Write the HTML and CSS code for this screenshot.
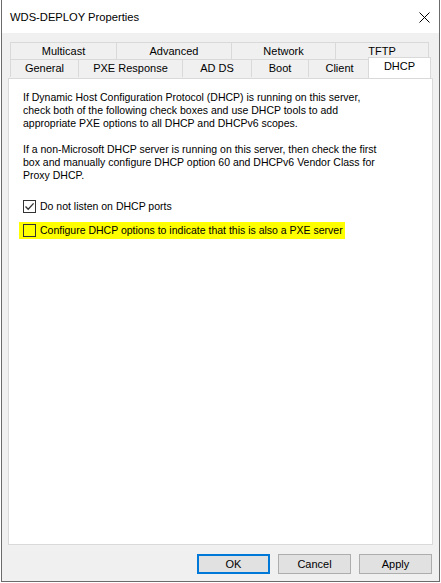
FILE: index.html
```html
<!DOCTYPE html>
<html>
<head>
<meta charset="utf-8">
<link rel="stylesheet" href="styles.css">
</head>
<body>
<div class="window">
  <div class="titlebar">
    <span class="title">WDS-DEPLOY Properties</span>
    <svg class="close" width="11" height="11" viewBox="0 0 11 11"><path d="M0.5 0.5 L10.5 10.5 M10.5 0.5 L0.5 10.5" stroke="#000" stroke-width="1" fill="none"/></svg>
  </div>
  <div class="client">
    <div class="tabs">
      <div class="tabrow back">
        <div class="tab w-multicast">Multicast</div>
        <div class="tab w-advanced">Advanced</div>
        <div class="tab w-network">Network</div>
        <div class="tab w-tftp last">TFTP</div>
      </div>
      <div class="tabrow front">
        <div class="tab w-general">General</div>
        <div class="tab w-pxe">PXE Response</div>
        <div class="tab w-adds">AD DS</div>
        <div class="tab w-boot">Boot</div>
        <div class="tab w-client">Client</div>
        <div class="tab selected">DHCP</div>
      </div>
    </div>
    <div class="panel">
      <p class="para">If Dynamic Host Configuration Protocol (DHCP) is running on this server,<br>check both of the following check boxes and use DHCP tools to add<br>appropriate PXE options to all DHCP and DHCPv6 scopes.</p>
      <p class="para">If a non-Microsoft DHCP server is running on this server, then check the first<br>box and manually configure DHCP option 60 and DHCPv6 Vendor Class for<br>Proxy DHCP.</p>
      <div class="check first">
        <span class="box"><svg width="11" height="11" viewBox="0 0 11 11"><path d="M1.5 5.5 L4.2 8.3 L9.6 2.4" stroke="#333" stroke-width="1.3" fill="none"/></svg></span>
        <span class="label">Do not listen on DHCP ports</span>
      </div>
      <div class="check second">
        <span class="box"></span>
        <span class="label">Configure DHCP options to indicate that this is also a PXE server</span>
      </div>
    </div>
    <div class="buttons">
      <div class="btn default">OK</div>
      <div class="btn">Cancel</div>
      <div class="btn">Apply</div>
    </div>
  </div>
</div>
</body>
</html>
```
FILE: styles.css
```css
html, body {
  margin: 0;
  padding: 0;
  background: #ffffff;
}
body {
  width: 441px;
  height: 583px;
  overflow: hidden;
  font-family: "Liberation Sans", Arial, sans-serif;
  font-size: 11px;
  color: #000;
}
.window {
  box-sizing: border-box;
  margin-left: 1px;
  width: 439px;
  height: 582px;
  border: 1px solid #6b6b6b;
  border-top: none;
  display: flex;
  flex-direction: column;
  background: #f0f0f0;
}
.titlebar {
  height: 33px;
  background: #ffffff;
  display: flex;
  align-items: center;
  justify-content: space-between;
  padding: 0 9px 0 8px;
  flex: none;
}
.title {
  font-family: "Liberation Sans", Arial, sans-serif;
  font-size: 11.2px;
  padding-top: 1px;
}
.close {
  display: block;
  margin-top: 1px;
}
.client {
  flex: 1;
  padding: 9px 6px 0 6px;
  display: flex;
  flex-direction: column;
}
.tabs {
  margin-left: 2px;
}
.tabrow {
  display: flex;
}
.tab {
  box-sizing: border-box;
  border: 1px solid #d9d9d9;
  border-right: none;
  border-bottom: none;
  background: #f0f0f0;
  text-align: center;
  line-height: 16px;
}
.tab.last {
  border-right: 1px solid #d9d9d9;
}
.back .tab {
  height: 17px;
}
.front .tab {
  height: 18px;
}
.w-multicast { width: 106px; }
.w-advanced { width: 115px; }
.w-network { width: 104px; }
.w-tftp { width: 94px; }
.w-general { width: 68px; }
.w-pxe { width: 104px; }
.w-adds { width: 69px; }
.w-boot { width: 57px; }
.w-client { width: 62px; }
.front .tab.selected {
  position: relative;
  z-index: 1;
  width: 63px;
  height: 21px;
  margin-top: -2px;
  margin-left: -2px;
  background: #ffffff;
  border-right: 1px solid #d9d9d9;
  line-height: 16px;
}
.panel {
  box-sizing: border-box;
  width: 425px;
  height: 467px;
  background: #ffffff;
  border: 1px solid #d9d9d9;
  padding: 12px 14px 0 14px;
  flex: none;
  font-size: 10.5px;
}
.para {
  margin: 0 0 13px 0;
  line-height: 13px;
  white-space: nowrap;
}
.check {
  display: flex;
  align-items: center;
  height: 17px;
}
.check.first {
  margin-top: 16px;
}
.check.second {
  display: inline-flex;
  margin-top: 7px;
  margin-left: -4px;
  padding: 0 2px 0 4px;
  background: #ffff00;
}
.box {
  box-sizing: border-box;
  width: 13px;
  height: 13px;
  border: 1px solid #333333;
  margin-right: 4px;
  display: flex;
  flex: none;
}
.check.first .box {
  background: #ffffff;
}
.label {
  white-space: nowrap;
  line-height: 13px;
  font-size: 10.5px;
}
.buttons {
  display: flex;
  justify-content: flex-end;
  gap: 8px;
  margin-top: 9px;
  padding-right: 1px;
}
.btn {
  box-sizing: border-box;
  width: 73px;
  height: 20px;
  border: 1px solid #adadad;
  background: #e1e1e1;
  display: flex;
  align-items: center;
  justify-content: center;
}
.btn.default {
  border: 2px solid #0078d7;
}
```
